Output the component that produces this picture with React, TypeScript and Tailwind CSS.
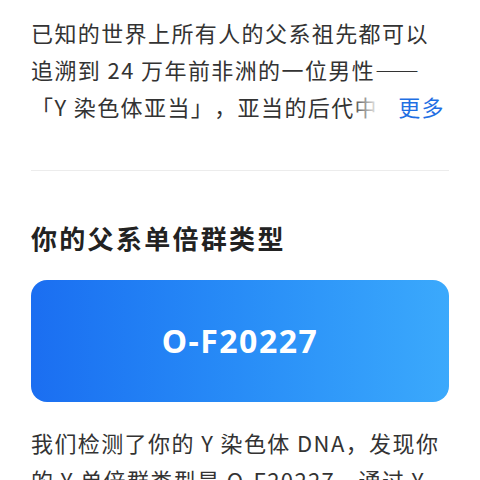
const FONT = { fontFamily: '"Noto Sans CJK SC", "Noto Sans", sans-serif' }

export default function App() {
  return (
    <div lang="zh-CN" className="w-[480px] h-[480px] overflow-hidden bg-white [text-spacing-trim:space-all]" style={FONT}>
      <div className="px-[31px] pt-[14px]">
        {/* intro, collapsed to 3 lines */}
        <div className="relative">
          <p className="text-[22px] leading-[37px] tracking-[1.4px] text-[#333333] line-clamp-3">
            已知的世界上所有人的父系祖先都可以追溯到 24 万年前非洲的一位男性——「Y 染色体亚当」，亚当的后代中有一支迁徙到了东亚，成为今天东亚人群的共同祖先之一。
          </p>
          <div className="absolute right-0 bottom-0 flex h-[37px] items-center">
            <div className="h-full w-[30px] bg-gradient-to-r from-white/0 to-white" />
            <span className="bg-white pl-[18px] pr-[4px] text-[22px] leading-[37px] tracking-[1.4px] text-[#1f6fe3]">更多</span>
          </div>
        </div>

        <div className="mt-[45px] h-px bg-[#ececec]" />

        <h2 className="mt-[49px] text-[26px] leading-[36px] font-bold tracking-[2.3px] text-[#222222]">
          你的父系单倍群类型
        </h2>

        <div className="mt-[24px] flex h-[122px] items-center justify-center rounded-[16px] bg-gradient-to-r from-[#1b6ef1] to-[#3ba9fc]">
          <span className="text-[32px] font-bold tracking-[1.5px] text-white" style={{ fontFamily: '"Noto Sans", sans-serif' }}>
            O-F20227
          </span>
        </div>

        <p className="mt-[22px] text-[22px] leading-[37px] tracking-[1.4px] text-[#333333]">
          我们检测了你的 Y 染色体 DNA，发现你的 Y 单倍群类型是 O-F20227，通过 Y 染色体的遗传特点，我们可以追溯你的父系祖先。
        </p>
      </div>
    </div>
  )
}
